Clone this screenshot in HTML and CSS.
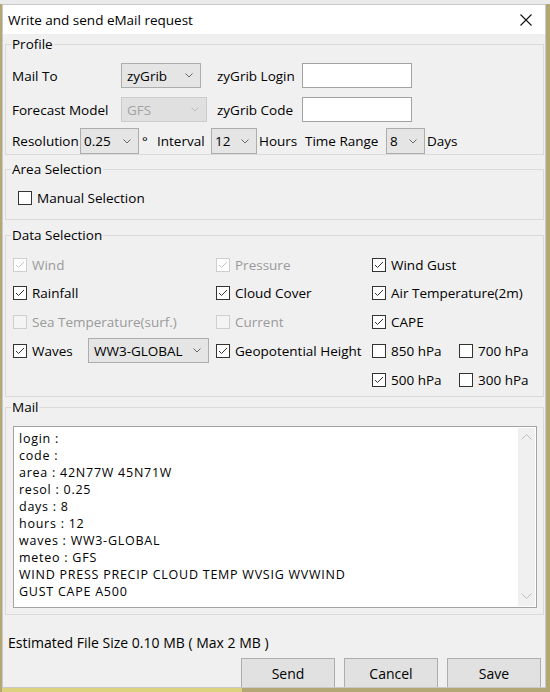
FILE: index.html
```html
<!DOCTYPE html>
<html>
<head>
<meta charset="utf-8">
<link rel="stylesheet" href="styles.css">
</head>
<body>
<div class="desk">
  <div class="win">
    <div class="titlebar">
      <span class="title">Write and send eMail request</span>
      <svg class="close" width="12" height="12" viewBox="0 0 12 12"><path d="M0.5 0.5 L11.5 11.5 M11.5 0.5 L0.5 11.5" stroke="#111" stroke-width="1.1" fill="none"/></svg>
    </div>
    <div class="content">
      <div class="group g-profile">
        <div class="legend">Profile</div>
        <div class="prow r1">
          <span class="lbl w109">Mail To</span>
          <div class="combo w80"><span>zyGrib</span><svg class="chev" width="8" height="5" viewBox="0 0 8 5"><polyline points="0.5,0.5 4,4 7.5,0.5" fill="none" stroke="#666"/></svg></div>
          <span class="lbl ml16 w85">zyGrib Login</span>
          <div class="input"></div>
        </div>
        <div class="prow r2">
          <span class="lbl w109">Forecast Model</span>
          <div class="combo w86 disabled"><span>GFS</span><svg class="chev" width="8" height="5" viewBox="0 0 8 5"><polyline points="0.5,0.5 4,4 7.5,0.5" fill="none" stroke="#bbb"/></svg></div>
          <span class="lbl ml10 w85">zyGrib Code</span>
          <div class="input"></div>
        </div>
        <div class="prow r3">
          <span class="lbl w68">Resolution</span>
          <div class="combo w59"><span>0.25</span><svg class="chev" width="8" height="5" viewBox="0 0 8 5"><polyline points="0.5,0.5 4,4 7.5,0.5" fill="none" stroke="#666"/></svg></div>
          <span class="lbl deg">°</span>
          <span class="lbl w54">Interval</span>
          <div class="combo w46"><span>12</span><svg class="chev" width="8" height="5" viewBox="0 0 8 5"><polyline points="0.5,0.5 4,4 7.5,0.5" fill="none" stroke="#666"/></svg></div>
          <span class="lbl ml2 w46">Hours</span>
          <span class="lbl w81">Time Range</span>
          <div class="combo w39"><span>8</span><svg class="chev" width="8" height="5" viewBox="0 0 8 5"><polyline points="0.5,0.5 4,4 7.5,0.5" fill="none" stroke="#666"/></svg></div>
          <span class="lbl ml2">Days</span>
        </div>
      </div>

      <div class="group g-area">
        <div class="legend">Area Selection</div>
        <div class="arow">
          <span class="cb"></span><span class="cbl">Manual Selection</span>
        </div>
      </div>

      <div class="group g-data">
        <div class="legend">Data Selection</div>
        <div class="dgrid">
          <div class="cell"><span class="cb dis on"><svg width="12" height="12" viewBox="0 0 12 12"><polyline points="2,6 4.5,8.5 10,3" fill="none" stroke="#c4c4c4"/></svg></span><span class="cbl dtext">Wind</span></div>
          <div class="cell"><span class="cb dis on"><svg width="12" height="12" viewBox="0 0 12 12"><polyline points="2,6 4.5,8.5 10,3" fill="none" stroke="#c4c4c4"/></svg></span><span class="cbl dtext">Pressure</span></div>
          <div class="cell span2"><span class="cb"><svg width="12" height="12" viewBox="0 0 12 12"><polyline points="2,6 4.5,8.5 10,3" fill="none" stroke="#333"/></svg></span><span class="cbl">Wind Gust</span></div>

          <div class="cell"><span class="cb"><svg width="12" height="12" viewBox="0 0 12 12"><polyline points="2,6 4.5,8.5 10,3" fill="none" stroke="#333"/></svg></span><span class="cbl">Rainfall</span></div>
          <div class="cell"><span class="cb"><svg width="12" height="12" viewBox="0 0 12 12"><polyline points="2,6 4.5,8.5 10,3" fill="none" stroke="#333"/></svg></span><span class="cbl">Cloud Cover</span></div>
          <div class="cell span2"><span class="cb"><svg width="12" height="12" viewBox="0 0 12 12"><polyline points="2,6 4.5,8.5 10,3" fill="none" stroke="#333"/></svg></span><span class="cbl">Air Temperature(2m)</span></div>

          <div class="cell"><span class="cb dis"></span><span class="cbl dtext">Sea Temperature(surf.)</span></div>
          <div class="cell"><span class="cb dis"></span><span class="cbl dtext">Current</span></div>
          <div class="cell span2"><span class="cb"><svg width="12" height="12" viewBox="0 0 12 12"><polyline points="2,6 4.5,8.5 10,3" fill="none" stroke="#333"/></svg></span><span class="cbl">CAPE</span></div>

          <div class="cell"><span class="cb"><svg width="12" height="12" viewBox="0 0 12 12"><polyline points="2,6 4.5,8.5 10,3" fill="none" stroke="#333"/></svg></span><span class="cbl wv">Waves</span>
            <div class="combo w121"><span>WW3-GLOBAL</span><svg class="chev" width="8" height="5" viewBox="0 0 8 5"><polyline points="0.5,0.5 4,4 7.5,0.5" fill="none" stroke="#666"/></svg></div>
          </div>
          <div class="cell"><span class="cb"><svg width="12" height="12" viewBox="0 0 12 12"><polyline points="2,6 4.5,8.5 10,3" fill="none" stroke="#333"/></svg></span><span class="cbl">Geopotential Height</span></div>
          <div class="cell"><span class="cb"></span><span class="cbl">850 hPa</span></div>
          <div class="cell"><span class="cb"></span><span class="cbl">700 hPa</span></div>

          <div class="cell"></div>
          <div class="cell"></div>
          <div class="cell"><span class="cb"><svg width="12" height="12" viewBox="0 0 12 12"><polyline points="2,6 4.5,8.5 10,3" fill="none" stroke="#333"/></svg></span><span class="cbl">500 hPa</span></div>
          <div class="cell"><span class="cb"></span><span class="cbl">300 hPa</span></div>
        </div>
      </div>

      <div class="group g-mail">
        <div class="legend">Mail</div>
        <div class="textarea">
          <div class="mailtext">
            <div>login :</div>
            <div>code :</div>
            <div>area : 42N77W 45N71W</div>
            <div>resol : 0.25</div>
            <div>days : 8</div>
            <div>hours : 12</div>
            <div>waves : WW3-GLOBAL</div>
            <div>meteo : GFS</div>
            <div>WIND PRESS PRECIP CLOUD TEMP WVSIG WVWIND</div>
            <div>GUST CAPE A500</div>
          </div>
          <div class="scroll">
            <svg width="11" height="6" viewBox="0 0 11 6"><polyline points="0.5,5.5 5.5,0.5 10.5,5.5" fill="none" stroke="#bdbdbd"/></svg>
            <svg width="11" height="6" viewBox="0 0 11 6"><polyline points="0.5,0.5 5.5,5.5 10.5,0.5" fill="none" stroke="#bdbdbd"/></svg>
          </div>
        </div>
      </div>

      <div class="estimate">Estimated File Size 0.10 MB ( Max 2 MB )</div>
      <div class="buttons">
        <div class="btn">Send</div>
        <div class="btn">Cancel</div>
        <div class="btn">Save</div>
      </div>
    </div>
  </div>
  <div class="dock"></div>
</div>
</body>
</html>
```

FILE: styles.css
```css
* { box-sizing: border-box; }
html, body { margin: 0; padding: 0; }
body {
  width: 550px;
  height: 692px;
  overflow: hidden;
  background: linear-gradient(#ebebeb 0 4px, #b3a775 4px);
  font-family: "Open Sans", "Noto Sans", sans-serif;
  font-size: 13.5px;
  color: #000;
}
.desk {
  padding: 4px 4px 0 2px;
}
.win {
  width: 544px;
  height: 684px;
  background: #f0f0f0;
  border: 1px solid #c9c9c9;
  overflow: hidden;
}
.titlebar {
  height: 29px;
  background: #fff;
  display: flex;
  align-items: center;
  justify-content: space-between;
  padding: 0 13px 0 5px;
}
.title { font-size: 13.5px; line-height: 16px; }
.content { display: flex; flex-direction: column; }

.group {
  border: 1px solid #dadada;
  margin: 0 1px 0 2px;
}
.legend {
  width: fit-content;
  margin: -9px 0 0 5px;
  padding: 0 1px;
  background: #f0f0f0;
  line-height: 16px;
  height: 16px;
}
.g-profile { margin-top: 10px; }
.g-area { margin-top: 14px; padding-bottom: 10px; }
.g-data { margin-top: 15px; padding-bottom: 2px; }
.g-mail { margin-top: 10px; padding-bottom: 6px; }

.prow {
  display: flex;
  align-items: center;
  height: 25px;
  padding-left: 6px;
}
.r1 { margin-top: 11px; }
.r2 { margin-top: 9px; }
.r3 { margin-top: 6px; height: 26px; }
.lbl { white-space: nowrap; flex: none; }
.w109 { width: 109px; }
.w85 { width: 85px; }
.w68 { width: 68px; }
.w54 { width: 54px; }
.w46 { width: 46px; }
.w81 { width: 81px; }
.ml16 { margin-left: 16px; }
.ml10 { margin-left: 10px; }
.ml2 { margin-left: 2px; }
.deg { width: 18px; padding-left: 3px; }

.combo {
  flex: none;
  height: 25px;
  display: flex;
  align-items: center;
  justify-content: space-between;
  padding: 0 7px 0 5px;
  background: #e5e5e5;
  border: 1px solid #adadad;
  white-space: nowrap;
}
.r3 .combo { height: 26px; padding-left: 3px; }
.combo.disabled {
  background: #e0e0e0;
  border-color: #cccccc;
  color: #a3a3a3;
}
.w80 { width: 80px; }
.w86 { width: 86px; }
.w59 { width: 59px; }
.w46.combo { width: 46px; }
.w39 { width: 39px; }
.w121 { width: 121px; }
.chev { flex: none; }

.input {
  width: 110px;
  height: 25px;
  background: #fff;
  border: 1px solid #a2a2a2;
  flex: none;
}

.arow {
  margin-top: 10px;
  height: 22px;
  display: flex;
  align-items: center;
  padding-left: 12px;
}
.cb {
  flex: none;
  width: 14px;
  height: 14px;
  border: 1px solid #333;
  background: #fff;
  display: flex;
  align-items: center;
  justify-content: center;
}
.cb.dis { border-color: #cfcfcf; background: #f4f4f4; }
.cb.dis.on { background: #fff; }
.cbl { margin-left: 5px; white-space: nowrap; }
.dtext { color: #9a9a9a; }

.dgrid {
  margin-top: 7px;
  padding-left: 7px;
  display: grid;
  grid-template-columns: 203px 156px 87px 1fr;
  grid-template-rows: 29px 28px 29px 29px 29px;
}
.cell { display: flex; align-items: center; }
.span2 { grid-column: span 2; }
.cbl.wv { width: 56px; }
.cell .combo { height: 25px; }

.textarea {
  margin: 11px 6px 0 7px;
  height: 182px;
  background: #fff;
  border: 1px solid #a3a3a3;
  display: flex;
}
.mailtext {
  flex: 1;
  padding: 3px 0 0 5px;
  line-height: 17px;
  font-size: 12.5px;
  letter-spacing: 0.75px;
}
.scroll {
  width: 17px;
  margin: 1px 1px 1px 0;
  background: #f0f0f0;
  display: flex;
  flex-direction: column;
  justify-content: space-between;
  align-items: center;
  padding: 6px 0 7px;
}

.estimate {
  margin-top: 20px;
  padding-left: 5px;
  line-height: 16px;
  font-size: 14px;
}
.buttons {
  margin-top: 7px;
  display: flex;
  justify-content: flex-end;
  gap: 9px;
  padding-right: 4px;
}
.btn {
  width: 94px;
  height: 30px;
  background: #e1e1e1;
  border: 1px solid #adadad;
  display: flex;
  align-items: center;
  justify-content: center;
  font-size: 14px;
}
.dock {
  height: 4px;
  background: #dcd27e;
  width: 240px;
}
```
